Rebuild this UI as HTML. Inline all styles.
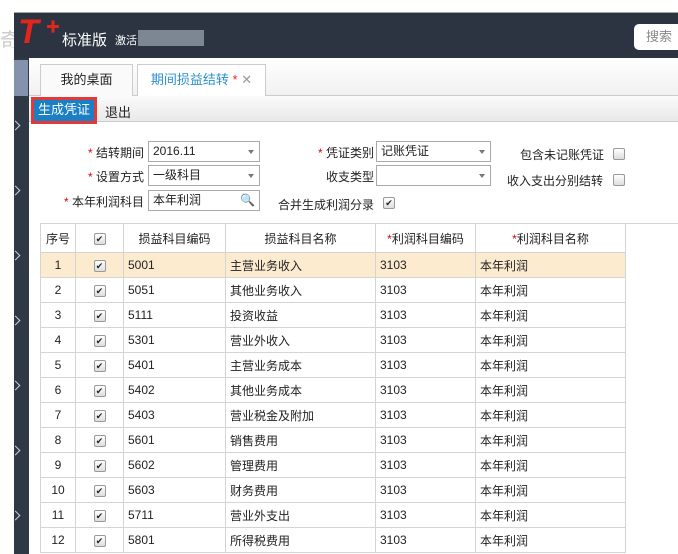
<!DOCTYPE html>
<html><head><meta charset="utf-8"><style>
*{margin:0;padding:0;box-sizing:border-box}
body{width:678px;height:554px;overflow:hidden;background:#fff;font-family:"Liberation Sans","Noto Sans CJK SC",sans-serif;font-size:12px;color:#222;position:relative}
.a{position:absolute}
.hdr{left:14px;top:12px;width:664px;height:46px;background:#2b3440;border-top:1px solid #9aa}
.side{left:14px;top:58px;width:15px;height:496px;background:#2f3946}
.chev{position:absolute;left:0;width:7px;height:7px;border-right:1px solid #ccd;border-top:1px solid #ccd;transform:rotate(45deg)}
.tabbar{left:29px;top:58px;width:649px;height:38px;background:linear-gradient(#fff,#f1f1f1);border-bottom:1px solid #ccc}
.tab{top:64px;height:32px;border:1px solid #ccc;border-bottom:none;background:#fafafa;font-size:13px;text-align:center;line-height:30px}
.tool{left:29px;top:96px;width:649px;height:26px;background:linear-gradient(#fafafa,#e9e9e9);border-bottom:1px solid #ccc}
.lbl{font-size:12px;text-align:right}
.st{color:#d01}
.sel{height:21px;border:1px solid #aaa;background:#fff;padding-left:4px;line-height:19px;font-size:12px}
.sel i{position:absolute;right:5px;top:8px;border:3px solid transparent;border-top:4px solid #777}
.cb{width:12px;height:12px;border:1px solid #999;border-radius:2px;background:linear-gradient(#fff,#ddd)}
table{position:absolute;left:40px;top:223px;border-collapse:collapse;font-size:12px}
td{border:1px solid #d4d4d4;height:25px;padding:0 4px}
tr.h td{height:29px;text-align:center}
.ck{display:inline-block;width:12px;height:12px;border:1px solid #999;border-radius:2px;background:linear-gradient(#fff,#ddd);font-size:9px;line-height:10px;text-align:center;vertical-align:middle}
</style></head><body>
<div class="a hdr"></div>
<div class="a" style="left:0;top:24px;width:14px;height:24px;overflow:hidden;color:#ccc;font-size:20px">奇</div>
<div class="a" style="left:18px;top:15px;font-size:34px;font-style:italic;font-weight:bold;color:#e1261c;line-height:34px">T</div>
<div class="a" style="left:46px;top:17px;color:#e1261c;font-size:14px;font-weight:bold">✚</div>
<div class="a" style="left:62px;top:29px;color:#fff;font-size:15px">标准版</div>
<div class="a" style="left:115px;top:32px;color:#fff;font-size:11px">激活</div>
<div class="a" style="left:138px;top:30px;width:66px;height:16px;background:#7d8794"></div>
<div class="a" style="left:634px;top:24px;width:50px;height:26px;background:#fff;border-radius:5px;color:#888;font-size:13px;line-height:26px;padding-left:12px">搜索</div>
<div class="a side">
<div class="a" style="left:0;top:2px;width:14px;height:36px;background:#8493ab"></div>
<div class="chev" style="top:64px;left:-2px"></div><div class="chev" style="top:129px;left:-2px"></div><div class="chev" style="top:194px;left:-2px"></div><div class="chev" style="top:259px;left:-2px"></div><div class="chev" style="top:324px;left:-2px"></div><div class="chev" style="top:389px;left:-2px"></div><div class="chev" style="top:454px;left:-2px"></div>
</div>
<div class="a tabbar"></div>
<div class="a tab" style="left:40px;width:93px">我的桌面</div>
<div class="a tab" style="left:137px;width:129px;background:#fff;color:#2a8fd0;height:33px">期间损益结转 <span style="color:#e22">*</span> <span style="color:#999">✕</span></div>
<div class="a tool"></div>
<div class="a" style="left:31px;top:97px;width:66px;height:27px;background:#1a7fc4;border:3px solid #e23a3a;color:#fff;font-size:13px;line-height:20px;text-align:center">生成凭证</div>
<div class="a" style="left:105px;top:102px;font-size:13px">退出</div>

<div class="a lbl" style="left:60px;top:144px;width:84px"><span class="st">*</span> 结转期间</div>
<div class="a sel" style="left:148px;top:141px;width:112px">2016.11<i></i></div>
<div class="a lbl" style="left:60px;top:168px;width:84px"><span class="st">*</span> 设置方式</div>
<div class="a sel" style="left:148px;top:165px;width:112px">一级科目<i></i></div>
<div class="a lbl" style="left:40px;top:193px;width:104px"><span class="st">*</span> 本年利润科目</div>
<div class="a sel" style="left:148px;top:190px;width:112px">本年利润<span style="position:absolute;right:4px;top:0;color:#c33">🔍</span></div>
<div class="a lbl" style="left:280px;top:144px;width:94px"><span class="st">*</span> 凭证类别</div>
<div class="a sel" style="left:376px;top:141px;width:115px">记账凭证<i></i></div>
<div class="a lbl" style="left:280px;top:168px;width:94px">收支类型</div>
<div class="a sel" style="left:376px;top:165px;width:115px"><i></i></div>
<div class="a" style="left:278px;top:196px">合并生成利润分录</div>
<div class="a cb" style="left:383px;top:197px;font-size:9px;line-height:10px;text-align:center">✔</div>
<div class="a" style="left:520px;top:146px">包含未记账凭证</div>
<div class="a cb" style="left:613px;top:148px"></div>
<div class="a" style="left:507px;top:172px">收入支出分别结转</div>
<div class="a cb" style="left:613px;top:174px"></div>
<div class="a" style="left:40px;top:223px;width:638px;border-top:1px solid #d4d4d4"></div>

<table>
<colgroup><col style="width:35px"><col style="width:48px"><col style="width:102px"><col style="width:150px"><col style="width:100px"><col style="width:150px"></colgroup>
<tr class="h"><td>序号</td><td><span class="ck">✔</span></td><td>损益科目编码</td><td>损益科目名称</td><td><span class="st">*</span>利润科目编码</td><td><span class="st">*</span>利润科目名称</td></tr>
<tr style="background:#fdebd0"><td align="center">1</td><td align="center"><span class="ck">✔</span></td><td>5001</td><td>主营业务收入</td><td>3103</td><td>本年利润</td></tr>
<tr><td align="center">2</td><td align="center"><span class="ck">✔</span></td><td>5051</td><td>其他业务收入</td><td>3103</td><td>本年利润</td></tr>
<tr><td align="center">3</td><td align="center"><span class="ck">✔</span></td><td>5111</td><td>投资收益</td><td>3103</td><td>本年利润</td></tr>
<tr><td align="center">4</td><td align="center"><span class="ck">✔</span></td><td>5301</td><td>营业外收入</td><td>3103</td><td>本年利润</td></tr>
<tr><td align="center">5</td><td align="center"><span class="ck">✔</span></td><td>5401</td><td>主营业务成本</td><td>3103</td><td>本年利润</td></tr>
<tr><td align="center">6</td><td align="center"><span class="ck">✔</span></td><td>5402</td><td>其他业务成本</td><td>3103</td><td>本年利润</td></tr>
<tr><td align="center">7</td><td align="center"><span class="ck">✔</span></td><td>5403</td><td>营业税金及附加</td><td>3103</td><td>本年利润</td></tr>
<tr><td align="center">8</td><td align="center"><span class="ck">✔</span></td><td>5601</td><td>销售费用</td><td>3103</td><td>本年利润</td></tr>
<tr><td align="center">9</td><td align="center"><span class="ck">✔</span></td><td>5602</td><td>管理费用</td><td>3103</td><td>本年利润</td></tr>
<tr><td align="center">10</td><td align="center"><span class="ck">✔</span></td><td>5603</td><td>财务费用</td><td>3103</td><td>本年利润</td></tr>
<tr><td align="center">11</td><td align="center"><span class="ck">✔</span></td><td>5711</td><td>营业外支出</td><td>3103</td><td>本年利润</td></tr>
<tr><td align="center">12</td><td align="center"><span class="ck">✔</span></td><td>5801</td><td>所得税费用</td><td>3103</td><td>本年利润</td></tr>
</table>
</body></html>
